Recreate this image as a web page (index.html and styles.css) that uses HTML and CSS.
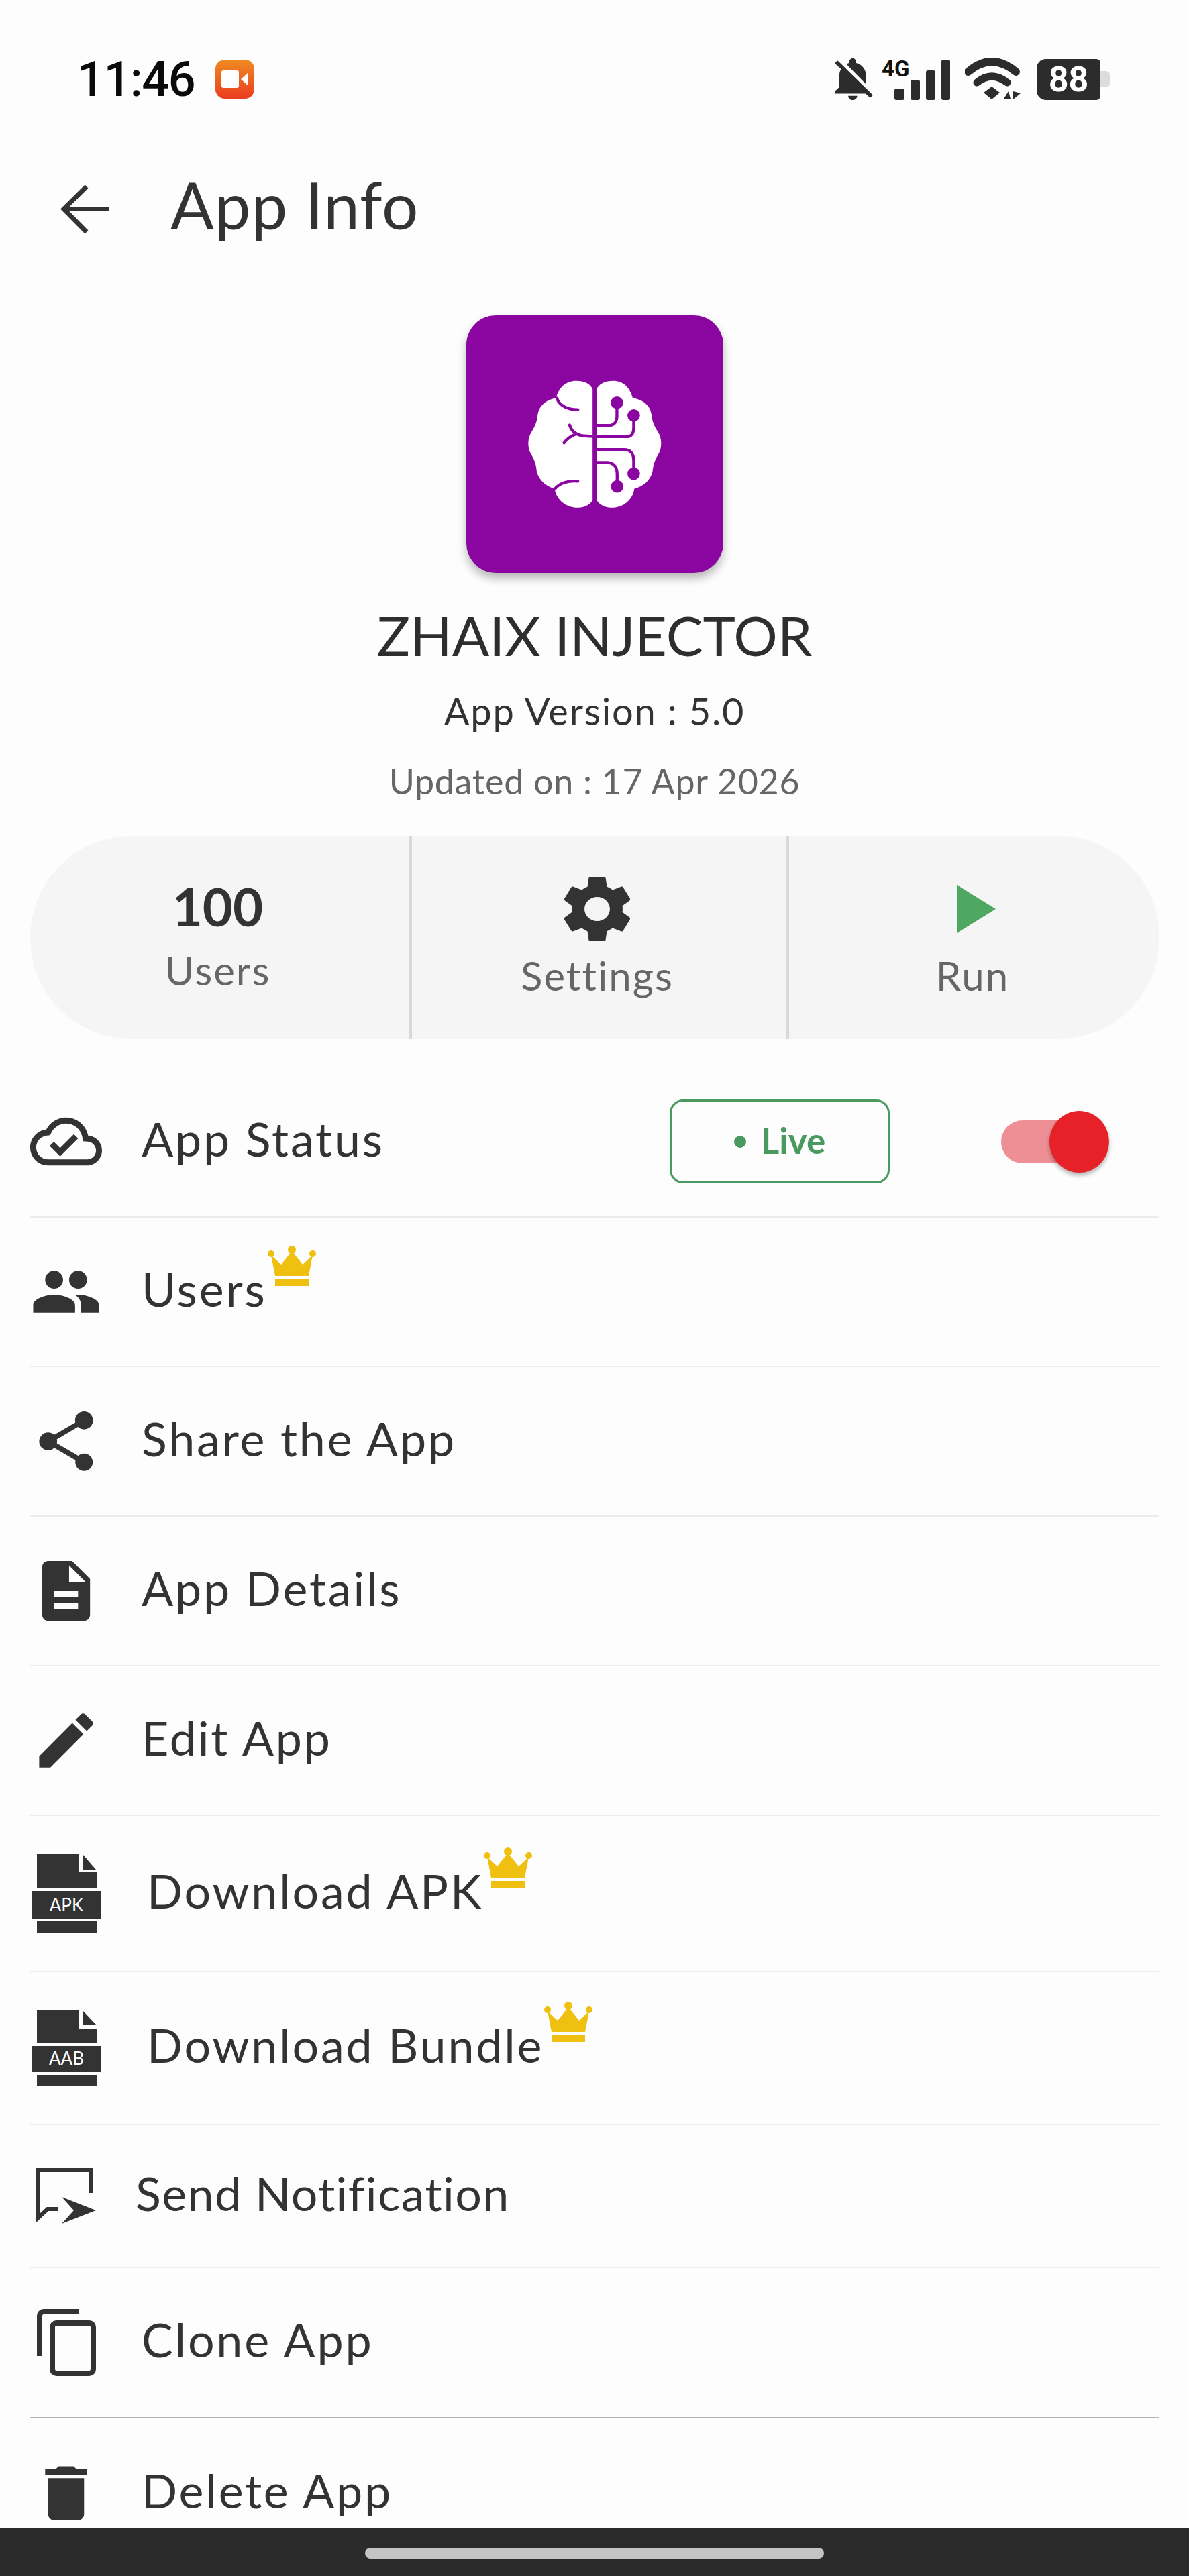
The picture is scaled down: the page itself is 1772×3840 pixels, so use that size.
FILE: index.html
```html
<!DOCTYPE html>
<html lang="en">
<head>
  <meta charset="UTF-8" />
  <meta name="viewport" content="width=device-width, initial-scale=1.0" />
  <title>App Info</title>
  <link rel="stylesheet" href="styles.css">
</head>
<body>
  <div class="screen">
    <!-- status bar -->
    <div class="status-bar">
      <div class="status-left">
        <span class="clock">11:46</span>
        <span class="rec-icon">
          <svg width="40" height="26" viewBox="0 0 40 26"><rect x="0" y="0" width="26" height="26" rx="3" fill="#fff"/><polygon points="29,13 40,3 40,23" fill="#fff"/></svg>
        </span>
      </div>
      <div class="status-right">
        <svg class="st-bell" width="57" height="62" viewBox="4 2.5 17 19.5" preserveAspectRatio="none"><path fill="#2c2c2c" d="M20 18.69L7.84 6.14 5.27 3.49 4 4.76l2.8 2.8v.01c-.52.99-.8 2.16-.8 3.42v5l-2 2v1h13.73l2 2L21 19.72l-1-1.03zM12 22c1.11 0 2-.89 2-2h-4c0 1.11.89 2 2 2zm6-7.32V11c0-3.08-1.64-5.64-4.5-6.32V4c0-.83-.67-1.5-1.5-1.5s-1.5.67-1.5 1.5v.68c-.15.03-.29.08-.42.12-.1.03-.2.07-.3.11h-.01c-.2.08-.4.17-.59.27-.01 0-.01 0-.02.01L18 14.68z"/></svg>
        <svg class="st-signal" width="101" height="62" viewBox="0 0 101 62">
          <text x="-1" y="27" class="st-4g">4G</text>
          <rect x="18" y="45" width="15" height="17" rx="3" fill="#2c2c2c"/>
          <rect x="42" y="32" width="14" height="30" rx="3" fill="#2c2c2c"/>
          <rect x="65" y="18" width="14" height="44" rx="3" fill="#2c2c2c"/>
          <rect x="88" y="2" width="13" height="60" rx="3" fill="#2c2c2c"/>
        </svg>
        <svg class="st-wifi" width="84" height="62" viewBox="0 0 84 62">
          <path d="M5 20Q40 -10 76 20" fill="none" stroke="#2c2c2c" stroke-width="12" stroke-linecap="round"/>
          <path d="M18 36Q40 18 63 36" fill="none" stroke="#2c2c2c" stroke-width="11" stroke-linecap="round"/>
          <polygon points="28,51 40,42 52,51 40,61" fill="#2c2c2c"/>
          <polygon points="58,60 65,49 68,60" fill="#2c2c2c"/>
          <polygon points="72,49 72,61 83,52" fill="#2c2c2c"/>
        </svg>
        <div class="battery">
          <span class="battery-level">88</span>
          <span class="battery-cap"></span>
        </div>
      </div>
    </div>

    <!-- app bar -->
    <div class="app-bar">
      <svg class="back-icon" width="74" height="74" viewBox="0 0 74 74"><path d="M73 36.5H6M39 3L5 36.5L39 71" fill="none" stroke="#333" stroke-width="7"/></svg>
      <h1 class="app-bar-title">App Info</h1>
    </div>

    <!-- hero -->
    <div class="hero">
      <div class="app-logo">
        <svg width="205" height="195" viewBox="430 405 616 584">
          <path fill="#fff" d="M728 450C720 425 690 412 655 412C610 412 575 440 565 490C530 495 490 515 482 565C478 600 470 615 455 640C435 670 435 715 455 745C470 770 475 790 478 820C490 860 520 885 558 895C565 945 610 982 665 980C695 980 720 965 728 945Z"/>
          <path fill="#fff" d="M746 450C755 425 785 412 820 412C865 412 895 440 908 490C945 495 985 515 992 565C996 600 1005 615 1020 640C1040 670 1040 715 1020 745C1005 770 1000 790 996 820C985 860 955 885 915 895C908 945 865 982 810 980C780 980 755 965 746 945Z"/>
          <g fill="none" stroke="#8b05a0" stroke-width="13" stroke-linecap="round">
            <path d="M568 490C580 525 620 542 662 541"/>
            <path d="M625 610C635 640 650 650 680 658L745 662"/>
            <path d="M600 690C615 670 630 660 650 652"/>
            <path d="M560 895C580 870 620 858 662 862"/>
            <path d="M748 612H800C825 612 837 595 837 570V510"/>
            <path d="M748 662H880C905 662 912 645 912 620V567"/>
            <path d="M748 720H870C895 720 912 735 912 770V828"/>
            <path d="M748 778H790C820 778 838 795 838 830V885"/>
          </g>
          <g fill="#8b05a0">
            <circle cx="837" cy="510" r="28"/>
            <circle cx="912" cy="567" r="28"/>
            <circle cx="912" cy="828" r="28"/>
            <circle cx="838" cy="885" r="28"/>
          </g>
        </svg>
      </div>
      <div class="app-name">ZHAIX INJECTOR</div>
      <div class="app-version">App Version : 5.0</div>
      <div class="app-updated">Updated on : 17 Apr 2026</div>
    </div>

    <!-- stats pill -->
    <div class="stats">
      <div class="stat stat-count">
        <div class="stat-number">100</div>
        <div class="stat-label">Users</div>
      </div>
      <div class="stat">
        <svg class="stat-icon" width="100" height="100" viewBox="2.5 2 19 20" preserveAspectRatio="none"><path fill="#333" d="M19.14 12.94c.04-.3.06-.61.06-.94 0-.32-.02-.64-.07-.94l2.03-1.58c.18-.14.23-.41.12-.61l-1.92-3.32c-.12-.22-.37-.29-.59-.22l-2.39.96c-.5-.38-1.03-.7-1.62-.94l-.36-2.54c-.04-.24-.24-.41-.48-.41h-3.84c-.24 0-.43.17-.47.41l-.36 2.54c-.59.24-1.13.57-1.62.94l-2.39-.96c-.22-.08-.47 0-.59.22L2.74 8.87c-.12.21-.08.47.12.61l2.03 1.58c-.05.3-.09.63-.09.94s.02.64.07.94l-2.03 1.58c-.18.14-.23.41-.12.61l1.92 3.32c.12.22.37.29.59.22l2.39-.96c.5.38 1.03.7 1.62.94l.36 2.54c.05.24.24.41.48.41h3.84c.24 0 .44-.17.47-.41l.36-2.54c.59-.24 1.13-.56 1.62-.94l2.39.96c.22.08.47 0 .59-.22l1.92-3.32c.12-.22.07-.47-.12-.61l-2.01-1.58zM12 15.6c-1.98 0-3.6-1.62-3.6-3.6s1.62-3.6 3.6-3.6 3.6 1.62 3.6 3.6-1.62 3.6-3.6 3.6z"/></svg>
        <div class="stat-label">Settings</div>
      </div>
      <div class="stat">
        <svg class="stat-icon stat-icon-run" width="58" height="100" viewBox="0 0 58 100"><polygon points="0,14 58,50 0,86" fill="#4fa862"/></svg>
        <div class="stat-label">Run</div>
      </div>
    </div>

    <!-- menu -->
    <div class="menu">
      <div class="row row-status">
        <span class="row-icon"><svg width="107" height="107" viewBox="0 0 24 24"><path fill="#333" d="M19.35 10.04C18.67 6.59 15.64 4 12 4 9.11 4 6.6 5.64 5.35 8.04 2.34 8.36 0 10.91 0 14c0 3.31 2.69 6 6 6h13c2.76 0 5-2.24 5-5 0-2.64-2.05-4.78-4.65-4.96zM19 18H6c-2.21 0-4-1.79-4-4 0-2.05 1.53-3.76 3.56-3.97l1.07-.11.5-.95C8.08 7.14 9.94 6 12 6c2.62 0 4.88 1.86 5.39 4.43l.3 1.5 1.53.11c1.56.1 2.78 1.41 2.78 2.96 0 1.65-1.35 3-3 3zm-9-3.82l-2.09-2.09L6.5 13.5 10 17l6.01-6.01-1.41-1.41z"/></svg></span>
        <span class="row-label">App Status</span>
        <span class="live-badge"><span class="live-dot"></span>Live</span>
        <span class="toggle"><span class="toggle-track"></span><span class="toggle-thumb"></span></span>
      </div>
      <div class="row">
        <span class="row-icon"><svg width="107" height="107" viewBox="0 0 24 24"><path fill="#333" d="M16 11c1.66 0 2.99-1.34 2.99-3S17.66 5 16 5c-1.66 0-3 1.34-3 3s1.34 3 3 3zm-8 0c1.66 0 2.99-1.34 2.99-3S9.66 5 8 5C6.34 5 5 6.34 5 8s1.34 3 3 3zm0 2c-2.33 0-7 1.17-7 3.5V19h14v-2.5c0-2.33-4.67-3.5-7-3.5zm8 0c-.29 0-.62.02-.97.05 1.16.84 1.97 1.97 1.97 3.45V19h6v-2.5c0-2.33-4.67-3.5-7-3.5z"/></svg></span>
        <span class="row-label">Users</span>
        <svg class="crown" width="72" height="60" viewBox="0 0 72 60"><path fill="#f0c010" d="M11 45L5 14L20 28L36 8L52 28L67 14L61 45Z"/><circle cx="5" cy="12" r="5" fill="#f0c010"/><circle cx="36" cy="6" r="6" fill="#f0c010"/><circle cx="67" cy="12" r="5" fill="#f0c010"/><rect x="11" y="50" width="50" height="10" fill="#f0c010"/></svg>
      </div>
      <div class="row">
        <span class="row-icon"><svg width="107" height="107" viewBox="0 0 24 24"><path fill="#333" d="M18 16.08c-.76 0-1.44.3-1.96.77L8.91 12.7c.05-.23.09-.46.09-.7s-.04-.47-.09-.7l7.05-4.11c.54.5 1.25.81 2.04.81 1.66 0 3-1.34 3-3s-1.34-3-3-3-3 1.34-3 3c0 .24.04.47.09.7L8.04 9.81C7.5 9.31 6.79 9 6 9c-1.66 0-3 1.34-3 3s1.34 3 3 3c.79 0 1.5-.31 2.04-.81l7.12 4.16c-.05.21-.08.43-.08.65 0 1.61 1.31 2.92 2.92 2.92 1.61 0 2.92-1.31 2.92-2.92s-1.31-2.92-2.92-2.92z"/></svg></span>
        <span class="row-label">Share the App</span>
      </div>
      <div class="row">
        <span class="row-icon"><svg width="107" height="107" viewBox="0 0 24 24"><path fill="#333" d="M14 2H6c-1.1 0-1.99.9-1.99 2L4 20c0 1.1.89 2 1.99 2H18c1.1 0 2-.9 2-2V8l-6-6zm2 16H8v-2h8v2zm0-4H8v-2h8v2zm-3-5V3.5L18.5 9H13z"/></svg></span>
        <span class="row-label">App Details</span>
      </div>
      <div class="row">
        <span class="row-icon"><svg width="107" height="107" viewBox="0 0 24 24"><path fill="#333" d="M3 17.25V21h3.75L17.81 9.94l-3.75-3.75L3 17.25zM20.71 7.04c.39-.39.39-1.02 0-1.41l-2.34-2.34c-.39-.39-1.02-.39-1.41 0l-1.83 1.83 3.75 3.75 1.83-1.83z"/></svg></span>
        <span class="row-label">Edit App</span>
      </div>
      <div class="row row-apk">
        <span class="row-icon"><svg width="102" height="117" viewBox="0 0 102 117"><path fill="#333" d="M7 0H69V27H96V51H7Z"/><polygon points="76,1 95,23 76,23" fill="#333"/><rect x="0" y="55" width="102" height="41" fill="#333"/><rect x="7" y="100" width="89" height="17" fill="#333"/><text x="51" y="85" class="file-tag">APK</text></svg></span>
        <span class="row-label row-label-file">Download APK</span>
        <svg class="crown" width="72" height="60" viewBox="0 0 72 60"><path fill="#f0c010" d="M11 45L5 14L20 28L36 8L52 28L67 14L61 45Z"/><circle cx="5" cy="12" r="5" fill="#f0c010"/><circle cx="36" cy="6" r="6" fill="#f0c010"/><circle cx="67" cy="12" r="5" fill="#f0c010"/><rect x="11" y="50" width="50" height="10" fill="#f0c010"/></svg>
      </div>
      <div class="row row-aab">
        <span class="row-icon"><svg width="102" height="113" viewBox="0 0 102 113"><path fill="#333" d="M7 0H69V27H96V48H7Z"/><polygon points="76,1 95,21 76,21" fill="#333"/><rect x="0" y="53" width="102" height="38" fill="#333"/><rect x="7" y="96" width="89" height="17" fill="#333"/><text x="51" y="81" class="file-tag">AAB</text></svg></span>
        <span class="row-label row-label-file">Download Bundle</span>
        <svg class="crown" width="72" height="60" viewBox="0 0 72 60"><path fill="#f0c010" d="M11 45L5 14L20 28L36 8L52 28L67 14L61 45Z"/><circle cx="5" cy="12" r="5" fill="#f0c010"/><circle cx="36" cy="6" r="6" fill="#f0c010"/><circle cx="67" cy="12" r="5" fill="#f0c010"/><rect x="11" y="50" width="50" height="10" fill="#f0c010"/></svg>
      </div>
      <div class="row row-send">
        <span class="row-icon"><svg width="90" height="84" viewBox="0 0 90 84"><path d="M81 37V3H3V74L17 61H33" fill="none" stroke="#333" stroke-width="6"/><polygon points="38,43 89,63 38,83 56,63" fill="#333"/></svg></span>
        <span class="row-label row-label-send">Send Notification</span>
      </div>
      <div class="row row-clone">
        <span class="row-icon"><svg width="88" height="100" viewBox="0 0 88 100"><path d="M62 4H10a6 6 0 0 0-6 6V70" fill="none" stroke="#333" stroke-width="8"/><rect x="23" y="21" width="61" height="75" rx="6" fill="none" stroke="#333" stroke-width="8"/></svg></span>
        <span class="row-label">Clone App</span>
      </div>
      <div class="row row-delete">
        <span class="row-icon"><svg width="107" height="107" viewBox="0 0 24 24"><path fill="#333" d="M6 19c0 1.1.9 2 2 2h8c1.1 0 2-.9 2-2V7H6v12zM19 4h-3.5l-1-1h-5l-1 1H5v2h14V4z"/></svg></span>
        <span class="row-label">Delete App</span>
      </div>
    </div>

    <div class="nav-bar"><span class="home-pill"></span></div>
  </div>
</body>
</html>
```

FILE: styles.css
```css
body {
  margin: 0;
  font-family: Lato, "Open Sans", sans-serif;
  background-color: #fdfdfd;
  color: #333;
}
.screen {
  display: flex;
  flex-direction: column;
  width: 1772px;
  height: 3840px;
  overflow: hidden;
}

/* status bar */
.status-bar {
  display: flex;
  flex: none;
  align-items: center;
  justify-content: space-between;
  height: 236px;
  padding: 0 117px 0 115px;
  box-sizing: border-box;
}
.status-left {
  display: flex;
  align-items: center;
  gap: 31px;
}
.clock {
  font-family: Roboto, sans-serif;
  font-size: 72px;
  font-weight: 500;
  letter-spacing: -1.5px;
  color: #0a0a0a;
}
.rec-icon {
  display: flex;
  align-items: center;
  justify-content: center;
  width: 58px;
  height: 58px;
  border-radius: 14px;
  background: linear-gradient(#ef8c22, #ea3c1e);
}
.status-right {
  display: flex;
  align-items: center;
  gap: 14px;
}
.st-signal { margin-right: 4px; overflow: visible; }
.st-4g {
  font-family: Roboto, sans-serif;
  font-size: 33px;
  font-weight: 700;
  fill: #111;
}
.st-wifi { margin-left: 4px; }
.battery {
  display: flex;
  align-items: center;
  margin-left: 9px;
}
.battery-level {
  width: 95px;
  height: 61px;
  border-radius: 14px 6px 6px 14px;
  background-color: #2c2c2c;
  color: #fff;
  font-family: Roboto, sans-serif;
  font-size: 52px;
  font-weight: 700;
  line-height: 61px;
  text-align: center;
}
.battery-cap {
  width: 15px;
  height: 24px;
  border-radius: 0 8px 8px 0;
  background-color: #dcdcdc;
}

/* app bar */
.app-bar {
  display: flex;
  flex: none;
  align-items: center;
  height: 152px;
  padding-left: 90px;
}
.app-bar-title {
  margin: 0 0 14px 90px;
  font-size: 96px;
  font-weight: 400;
  letter-spacing: 1px;
  line-height: 110px;
  color: #333;
}

/* hero */
.hero {
  display: flex;
  flex: none;
  flex-direction: column;
  align-items: center;
  padding-top: 82px;
}
.app-logo {
  display: flex;
  align-items: center;
  justify-content: center;
  width: 383px;
  height: 384px;
  border-radius: 44px;
  background-color: #8b05a0;
  box-shadow: 0 8px 14px rgba(0, 0, 0, 0.28);
}
.app-name {
  margin-top: 52px;
  font-size: 82px;
  font-weight: 400;
  line-height: 80px;
  color: #2e2e2e;
}
.app-version {
  margin-top: 44px;
  font-size: 56px;
  letter-spacing: 1.8px;
  line-height: 60px;
  color: #333;
}
.app-updated {
  margin-top: 44px;
  font-size: 52px;
  letter-spacing: 0.7px;
  line-height: 60px;
  color: #666;
}

/* stats pill */
.stats {
  display: grid;
  flex: none;
  grid-template-columns: 564px 562px 557px;
  height: 303px;
  margin: 52px 44px 0 45px;
  border-radius: 151px;
  background-color: #f5f5f5;
}
.stat {
  display: flex;
  flex-direction: column;
  align-items: center;
  box-sizing: border-box;
  padding: 59px 5px 0 0;
  border-left: 5px solid #d9d9d9;
}
.stat-count {
  padding: 67px 5px 0 0;
  border-left: none;
}
.stat-icon-run { margin-left: 10px; }
.stat-number {
  margin-top: -2px;
  font-size: 78px;
  font-weight: 700;
  line-height: 80px;
  color: #333;
}
.stat-label {
  margin-top: 19px;
  font-size: 60px;
  letter-spacing: 2px;
  line-height: 60px;
  color: #666;
}
.stat-count .stat-label {
  margin-top: 25px;
}

/* menu */
.menu {
  flex: 1;
  min-height: 0;
  margin: 41px 44px 0 45px;
}
.row {
  display: flex;
  align-items: center;
  height: 223px;
  box-sizing: border-box;
  border-bottom: 2px solid #ececec;
}
.row-status { height: 225px; }
.row-apk { height: 233px; }
.row-aab { height: 228px; }
.row-send { height: 213px; }
.row-clone { height: 224px; border-bottom-color: #b4b4b4; }
.row-delete { border-bottom: none; }
.row-icon {
  display: flex;
  flex: none;
  align-items: center;
  justify-content: center;
  width: 107px;
}
.row-label {
  margin-left: 59px;
  padding-bottom: 10px;
  font-size: 70px;
  letter-spacing: 2.8px;
  color: #333;
}
.row-label-file { margin-left: 67px; }
.row-label-send { margin-left: 50px; letter-spacing: 1.4px; }
.crown {
  flex: none;
  margin: 0 0 78px 1px;
}

.live-badge {
  display: flex;
  flex: none;
  align-items: center;
  justify-content: center;
  gap: 22px;
  width: 328px;
  height: 125px;
  box-sizing: border-box;
  margin-left: auto;
  padding-bottom: 4px;
  border: 3px solid #4a9a60;
  border-radius: 20px;
  color: #4a9a60;
  font-size: 53px;
  font-weight: 700;
}
.live-dot {
  width: 18px;
  height: 18px;
  margin-top: 4px;
  border-radius: 50%;
  background-color: #4a9a60;
}
.toggle {
  position: relative;
  display: flex;
  flex: none;
  align-items: center;
  width: 161px;
  height: 92px;
  margin: 0 75px 0 166px;
}
.toggle-track {
  width: 133px;
  height: 64px;
  border-radius: 32px;
  background-color: #ee8f96;
}
.toggle-thumb {
  position: absolute;
  top: 0;
  right: 0;
  width: 89px;
  height: 92px;
  border-radius: 50%;
  background-color: #e62228;
  box-shadow: 0 4px 6px rgba(0, 0, 0, 0.3);
}
.file-tag {
  font-size: 26px;
  fill: #fff;
  text-anchor: middle;
}

/* bottom bar */
.nav-bar {
  display: flex;
  flex: none;
  justify-content: center;
  height: 71px;
  padding-top: 29px;
  box-sizing: border-box;
  background-color: #2b2b2b;
}
.home-pill {
  width: 684px;
  height: 16px;
  border-radius: 8px;
  background-color: #c4c4c4;
}
```
